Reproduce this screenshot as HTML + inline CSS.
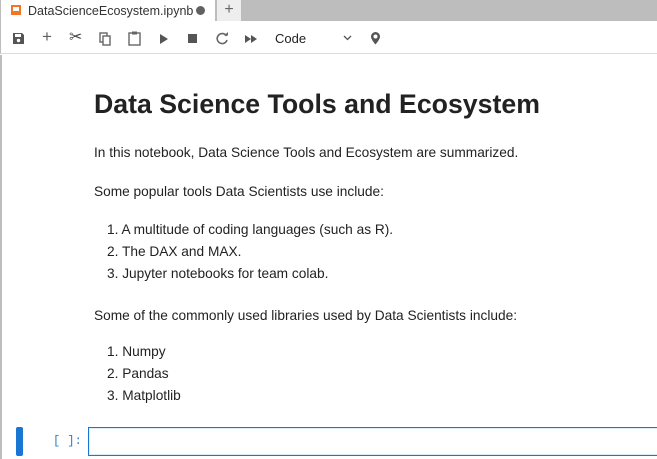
<!DOCTYPE html>
<html><head><style>
body{margin:0;width:657px;height:459px;overflow:hidden;background:#fff;font-family:"Liberation Sans",sans-serif;color:#212121;position:relative}
.tabbar{position:absolute;left:0;top:0;width:657px;height:21px;background:#bdbdbd}
.tab{position:absolute;left:0;top:0;width:215px;height:22px;background:#fff;border-left:1px solid #bdbdbd;box-sizing:border-box}
.tab .ic{position:absolute;left:10px;top:5px;width:10px;height:10px;background:#f37626;}
.tab .ic:after{content:"";position:absolute;left:2px;top:2px;width:6px;height:4px;background:#fff}
.tab .t{position:absolute;left:27px;top:4px;font-size:12.5px;color:#333}
.tab .dot{position:absolute;left:195px;top:6px;width:9px;height:9px;border-radius:50%;background:#616161}
.plus{position:absolute;left:217px;top:0;width:24px;height:21px;background:#eee;font-size:16px;text-align:center;line-height:20px;color:#666}
.toolbar{position:absolute;left:0;top:21px;width:657px;height:33px;border-bottom:1px solid #ddd;border-left:1px solid #bdbdbd;box-sizing:border-box}
.toolbar span{position:absolute;top:9px;font-size:13px;color:#616161}
.main{position:absolute;left:0;top:55px;width:657px;height:404px;border-left:2px solid #bdbdbd;box-sizing:border-box}
.c{position:absolute;left:94px;font-size:13.7px;color:#222;white-space:nowrap}
h1{position:absolute;left:94px;top:89px;margin:0;font-size:26.7px;font-weight:bold;color:#222}
.bar{position:absolute;left:16px;top:427px;width:7px;height:29px;background:#1976d2;border-radius:2px}
.prompt{position:absolute;left:53px;top:434px;font-family:"Liberation Mono",monospace;font-size:12px;color:#307fc1}
.inp{position:absolute;left:88px;top:427px;width:580px;height:29px;border:1px solid #1976d2;box-sizing:border-box;box-shadow:inset 0 0 0 1px #dceefc}
</style></head><body>
<div class="tabbar"></div>
<div class="tab"><div class="ic"></div><div class="t">DataScienceEcosystem.ipynb</div><div class="dot"></div></div>
<div class="plus">+</div>
<div class="toolbar">
<svg style="position:absolute;left:11px;top:11px" width="13" height="13" viewBox="0 0 13 13"><path d="M1 1h9l2 2v9H1z" fill="#555"/><rect x="3" y="2" width="6" height="3" fill="#fff"/><circle cx="6.5" cy="8.5" r="1.7" fill="#fff"/></svg>
<span style="left:41px;top:6px;font-size:17px">+</span>
<span style="left:68px;top:6px;font-size:16px;color:#444">✂</span>
<svg style="position:absolute;left:98px;top:11px" width="13" height="14"><rect x="1" y="1" width="7" height="9" fill="none" stroke="#666" stroke-width="1.4"/><rect x="4" y="4" width="7" height="9" fill="#fff" stroke="#666" stroke-width="1.4"/></svg>
<svg style="position:absolute;left:127px;top:10px" width="13" height="15"><rect x="1" y="2" width="11" height="12" fill="none" stroke="#666" stroke-width="1.4"/><rect x="4" y="0.5" width="5" height="3" fill="#666"/></svg>
<svg style="position:absolute;left:159px;top:13px" width="9" height="10"><path d="M0 0L8 5L0 10z" fill="#555"/></svg>
<svg style="position:absolute;left:187px;top:13px" width="10" height="10"><rect width="9" height="9" fill="#555"/></svg>
<svg style="position:absolute;left:215px;top:11px" width="13" height="13" viewBox="0 0 13 13"><path d="M10.5 4A5 5 0 1 0 11 8" fill="none" stroke="#666" stroke-width="1.6"/><path d="M8 3.5h4V0z" fill="#666"/></svg>
<svg style="position:absolute;left:244px;top:14px" width="13" height="8"><path d="M0 0l6 4l-6 4zM6 0l6 4l-6 4z" fill="#555"/></svg>
<span style="left:274px;top:10px;color:#222">Code</span>
<svg style="position:absolute;left:342px;top:14px" width="9" height="6"><path d="M1 1l3.5 3.5L8 1" fill="none" stroke="#555" stroke-width="1.3"/></svg>
<svg style="position:absolute;left:369px;top:10px" width="11" height="15"><path d="M5.5 1a4.5 4.5 0 0 1 4.5 4.5c0 3-4.5 8-4.5 8s-4.5-5-4.5-8A4.5 4.5 0 0 1 5.5 1z" fill="#555"/><circle cx="5.5" cy="5.5" r="2" fill="#fff"/></svg>
</div>
<div class="main"></div>
<h1>Data Science Tools and Ecosystem</h1>
<div class="c" style="top:145px">In this notebook, Data Science Tools and Ecosystem are summarized.</div>
<div class="c" style="top:184px">Some popular tools Data Scientists use include:</div>
<div class="c" style="top:222px;left:107px">1. A multitude of coding languages (such as R).</div>
<div class="c" style="top:244px;left:107px">2. The DAX and MAX.</div>
<div class="c" style="top:266px;left:107px">3. Jupyter notebooks for team colab.</div>
<div class="c" style="top:308px">Some of the commonly used libraries used by Data Scientists include:</div>
<div class="c" style="top:344px;left:107px">1. Numpy</div>
<div class="c" style="top:366px;left:107px">2. Pandas</div>
<div class="c" style="top:388px;left:107px">3. Matplotlib</div>
<div class="bar"></div>
<div class="prompt">[ ]:</div>
<div class="inp"></div>
</body></html>
